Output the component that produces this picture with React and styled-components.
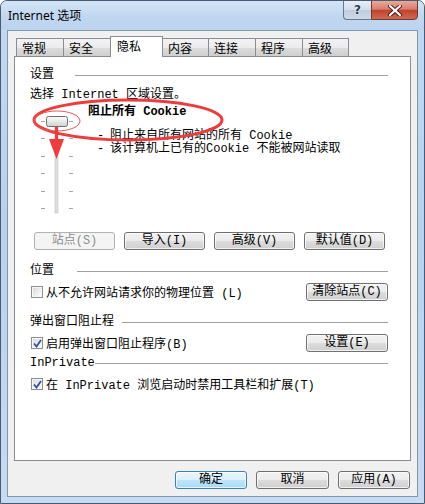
import React from "react";
import styled, { createGlobalStyle } from "styled-components";

const GlobalStyle = createGlobalStyle`
  html, body {
    margin: 0;
    padding: 0;
    background: #ffffff;
  }
  body {
    font-family: "Liberation Mono", "Noto Sans CJK SC", monospace;
    font-size: 12px;
    color: #000;
  }
  * {
    box-sizing: border-box;
  }
`;

const Window = styled.div`
  position: relative;
  width: 425px;
  height: 504px;
  border: 1px solid #4a5b70;
  border-radius: 7px 7px 0 0;
  background: linear-gradient(to bottom, #c3d9f2 0%, #b9d1ed 45%, #c7dbf2 100%);
  display: flex;
  flex-direction: column;
  overflow: hidden;
`;

const TitleBar = styled.div`
  height: 29px;
  flex: none;
  display: flex;
  align-items: flex-start;
  padding: 0 6px 0 7px;
  background: linear-gradient(to bottom, #d3e4f7 0%, #bfd6f0 60%, #bcd4ef 100%);
`;

const Title = styled.div`
  font-family: "Noto Sans", "Noto Sans CJK SC", sans-serif;
  font-size: 12px;
  line-height: 29px;
  color: #000;
`;

const Caption = styled.div`
  margin-left: auto;
  margin-top: -1px;
  display: flex;
`;

const HelpButton = styled.div`
  width: 28px;
  height: 20px;
  border: 1px solid #6a788b;
  border-right: none;
  border-radius: 0 0 0 4px;
  background: linear-gradient(to bottom, #e7eef7 0%, #d2dded 48%, #bfcde0 52%, #cdd9e8 100%);
  color: #2e3a4a;
  font-family: "DejaVu Sans", sans-serif;
  font-weight: bold;
  font-size: 12px;
  line-height: 18px;
  text-align: center;
  text-shadow: 0 0 2px #fff;
`;

const CloseButton = styled.div`
  width: 47px;
  height: 20px;
  border: 1px solid #6d3a33;
  border-radius: 0 0 4px 0;
  background: linear-gradient(to bottom, #e9a99b 0%, #d77f6e 45%, #c2432e 52%, #cf6a50 100%);
  display: flex;
  align-items: center;
  justify-content: center;
`;

const Client = styled.div`
  flex: 1;
  margin: 0 6px 6px;
  border: 1px solid #8296ad;
  background: #f0f0f0;
  padding: 5px 6px 0;
  display: flex;
  flex-direction: column;
`;

const TabRow = styled.div`
  height: 21px;
  margin-bottom: -1px;
  padding-left: 2px;
  display: flex;
  align-items: flex-end;
`;

const Tab = styled.div`
  position: relative;
  z-index: ${(p) => (p.$active ? 2 : 0)};
  width: ${(p) => p.$w}px;
  height: ${(p) => (p.$active ? 21 : 19)}px;
  margin-left: ${(p) => (p.$first ? 0 : -1)}px;
  border: 1px solid #898c95;
  border-bottom: ${(p) => (p.$active ? "none" : "1px solid #898c95")};
  background: ${(p) =>
    p.$active ? "#ffffff" : "linear-gradient(to bottom, #f3f3f3 0%, #ebebeb 50%, #dddddd 51%, #cfcfcf 100%)"};
  padding-left: ${(p) => (p.$active ? 6 : 5)}px;
  line-height: ${(p) => (p.$active ? 18 : 17)}px;
  font-family: "Noto Sans CJK SC", sans-serif;
  white-space: nowrap;
`;

const Panel = styled.div`
  height: 405px;
  flex: none;
  border: 1px solid #898c95;
  background: #ffffff;
  padding: 11px 22px 0 15px;
  display: flex;
  flex-direction: column;
`;

const GroupHead = styled.div`
  display: flex;
  align-items: center;
  height: 14px;
  line-height: 14px;
  margin-top: ${(p) => p.$mt || 0}px;
  white-space: nowrap;
`;

const GroupLabel = styled.span`
  min-width: ${(p) => p.$w}px;
  flex: none;
`;

const GroupRule = styled.div`
  flex: 1;
  height: 1px;
  background: #a0a0a0;
  box-shadow: 0 1px 0 #ffffff;
`;

const Intro = styled.div`
  margin-top: 6px;
  line-height: 14px;
  white-space: nowrap;
`;

const SliderRow = styled.div`
  margin-top: 3px;
  height: 110px;
  display: flex;
`;

const SliderArt = styled.svg`
  flex: none;
  width: 58px;
  height: 110px;
`;

const Level = styled.div`
  display: flex;
  flex-direction: column;
  white-space: nowrap;
`;

const LevelTitle = styled.div`
  font-weight: bold;
  line-height: 14px;
`;

const Bullets = styled.div`
  margin-top: 11px;
  margin-left: 9px;
`;

const Bullet = styled.div`
  display: flex;
  line-height: 13px;
  &::before {
    content: "-";
    width: 13px;
  }
`;

const ButtonRow = styled.div`
  margin-top: 17px;
  padding-left: 4px;
  display: flex;
  gap: 9px;
`;

const Button = styled.div`
  width: ${(p) => p.$w || 81}px;
  height: 18px;
  flex: none;
  border: 1px solid ${(p) => (p.$disabled ? "#adb2b5" : p.$default ? "#3c7fb1" : "#707070")};
  border-radius: 3px;
  background: ${(p) =>
    p.$disabled
      ? "#f4f4f4"
      : p.$default
      ? "linear-gradient(to bottom, #eaf6fd 0%, #d9f0fc 50%, #bee6fd 51%, #a7d9f5 100%)"
      : "linear-gradient(to bottom, #f2f2f2 0%, #ebebeb 50%, #dddddd 51%, #cfcfcf 100%)"};
  box-shadow: inset 0 0 0 1px ${(p) => (p.$disabled ? "#f4f4f4" : "rgba(255,255,255,0.7)")};
  color: ${(p) => (p.$disabled ? "#8d8d8d" : "#000")};
  text-align: center;
  line-height: 16px;
  white-space: nowrap;
`;

const OptionRow = styled.div`
  margin-top: 5px;
  height: 18px;
  display: flex;
  align-items: center;
  white-space: nowrap;
`;

const Box = styled.span`
  flex: none;
  width: 12px;
  height: 12px;
  margin: 0 3px 0 1px;
  border: 1px solid #8e8f8f;
  background: linear-gradient(135deg, #d6d6d6 0%, #f4f4f4 70%, #ffffff 100%);
  box-shadow: inset 0 0 0 1px #f7f7f7;
  display: flex;
  align-items: center;
  justify-content: center;
`;

const OptionText = styled.span`
  flex: 1;
`;

const Footer = styled.div`
  margin-top: 10px;
  padding-right: 1px;
  display: flex;
  justify-content: flex-end;
  gap: 9px;
`;

const Annotation = styled.svg`
  position: absolute;
  left: -1px;
  top: -1px;
  width: 425px;
  height: 504px;
  pointer-events: none;
`;

const Checkbox = ({ checked }) => (
  <Box>
    {checked && (
      <svg width="9" height="9" viewBox="0 0 9 9">
        <path d="M1 4.5 L3.5 7.5 L8 1" fill="none" stroke="#2f4fa8" strokeWidth="1.8" />
      </svg>
    )}
  </Box>
);

const Slider = () => {
  const ticks = [16, 33, 51, 68, 86, 103];
  return (
    <SliderArt viewBox="0 0 58 110">
      <defs>
        <linearGradient id="thumb" x1="0" y1="0" x2="0" y2="1">
          <stop offset="0" stopColor="#fbfbfb" />
          <stop offset="0.5" stopColor="#e9e9e9" />
          <stop offset="1" stopColor="#cfcfcf" />
        </linearGradient>
      </defs>
      <rect x="25" y="21" width="3" height="87" fill="#dedede" stroke="#c4c4c4" strokeWidth="0.6" />
      {ticks.map((y) => (
        <g key={y} stroke="#a6a6a6" strokeWidth="1">
          <line x1="11" y1={y + 0.5} x2="15" y2={y + 0.5} />
          <line x1="39" y1={y + 0.5} x2="43" y2={y + 0.5} />
        </g>
      ))}
      <rect x="16.5" y="11.5" width="21" height="10" rx="2" fill="url(#thumb)" stroke="#707070" />
    </SliderArt>
  );
};

const tabs = [
  { label: "常规", w: 48 },
  { label: "安全", w: 48 },
  { label: "隐私", w: 53, active: true },
  { label: "内容", w: 47 },
  { label: "连接", w: 48 },
  { label: "程序", w: 48 },
  { label: "高级", w: 47 },
];

export default function App() {
  return (
    <>
      <GlobalStyle />
      <Window>
        <TitleBar>
          <Title>Internet 选项</Title>
          <Caption>
            <HelpButton>?</HelpButton>
            <CloseButton>
              <svg width="14" height="11" viewBox="0 0 14 11">
                <path d="M2 1 L12 10 M12 1 L2 10" stroke="#4a1c16" strokeWidth="4" strokeLinecap="round" />
                <path d="M2 1 L12 10 M12 1 L2 10" stroke="#ffffff" strokeWidth="2.2" strokeLinecap="round" />
              </svg>
            </CloseButton>
          </Caption>
        </TitleBar>
        <Client>
          <TabRow>
            {tabs.map((t, i) => (
              <Tab key={t.label} $w={t.w} $active={t.active} $first={i === 0}>
                {t.label}
              </Tab>
            ))}
          </TabRow>
          <Panel>
            <GroupHead>
              <GroupLabel $w={45}>设置</GroupLabel>
              <GroupRule />
            </GroupHead>
            <Intro>选择 Internet 区域设置。</Intro>
            <SliderRow>
              <Slider />
              <Level>
                <LevelTitle>阻止所有 Cookie</LevelTitle>
                <Bullets>
                  <Bullet>阻止来自所有网站的所有 Cookie</Bullet>
                  <Bullet>该计算机上已有的Cookie 不能被网站读取</Bullet>
                </Bullets>
              </Level>
            </SliderRow>
            <ButtonRow>
              <Button $disabled>站点(S)</Button>
              <Button>导入(I)</Button>
              <Button>高级(V)</Button>
              <Button>默认值(D)</Button>
            </ButtonRow>

            <GroupHead $mt={14}>
              <GroupLabel $w={47}>位置</GroupLabel>
              <GroupRule />
            </GroupHead>
            <OptionRow>
              <Checkbox />
              <OptionText>从不允许网站请求你的物理位置 (L)</OptionText>
              <Button $w={82}>清除站点(C)</Button>
            </OptionRow>

            <GroupHead $mt={14}>
              <GroupLabel $w={92}>弹出窗口阻止程</GroupLabel>
              <GroupRule />
            </GroupHead>
            <OptionRow>
              <Checkbox checked />
              <OptionText>启用弹出窗口阻止程序(B)</OptionText>
              <Button $w={82}>设置(E)</Button>
            </OptionRow>

            <GroupHead $mt={4}>
              <GroupLabel $w={53}>InPrivate</GroupLabel>
              <GroupRule />
            </GroupHead>
            <OptionRow>
              <Checkbox checked />
              <OptionText>在 InPrivate 浏览启动时禁用工具栏和扩展(T)</OptionText>
            </OptionRow>
          </Panel>
          <Footer>
            <Button $w={72} $default>确定</Button>
            <Button $w={73}>取消</Button>
            <Button $w={72}>应用(A)</Button>
          </Footer>
        </Client>
        <Annotation viewBox="0 0 425 504">
          <ellipse cx="128" cy="120" rx="94" ry="20" fill="none" stroke="#ee3b3b" strokeWidth="3" />
          <ellipse cx="57" cy="121" rx="23" ry="10" fill="none" stroke="#ee5555" strokeWidth="1" />
          <line x1="56.5" y1="127" x2="56.5" y2="142" stroke="#ee3b3b" strokeWidth="3" />
          <polygon points="49,139 64,139 56.5,159" fill="#ee3b3b" />
        </Annotation>
      </Window>
    </>
  );
}
